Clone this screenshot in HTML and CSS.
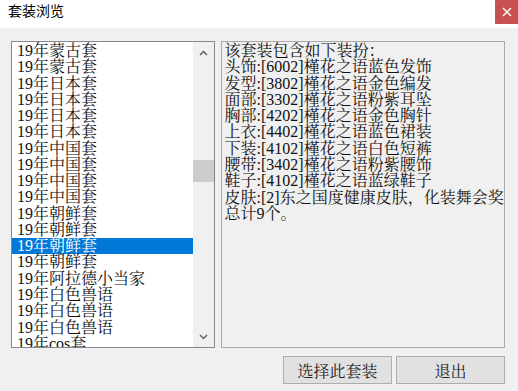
FILE: index.html
```html
<!DOCTYPE html>
<html lang="zh-CN">
<head>
    <meta charset="UTF-8">
    <title>套装浏览</title>
    <link rel="stylesheet" href="styles.css">
</head>
<body>

    <!-- Title bar -->
    <div class="titlebar">
        <span class="title">套装浏览</span>
        <div class="close-btn">
            <svg width="10" height="10" viewBox="0 0 10 10">
                <path d="M1 1 L9 9 M9 1 L1 9" stroke="#fff" stroke-width="1.4" fill="none"/>
            </svg>
        </div>
    </div>

    <div class="dialog-body">
        <div class="panes">
            <!-- Suit list -->
            <div class="listbox">
                <ul class="items">
                    <li>19年蒙古套</li>
                    <li>19年蒙古套</li>
                    <li>19年日本套</li>
                    <li>19年日本套</li>
                    <li>19年日本套</li>
                    <li>19年日本套</li>
                    <li>19年中国套</li>
                    <li>19年中国套</li>
                    <li>19年中国套</li>
                    <li>19年中国套</li>
                    <li>19年朝鲜套</li>
                    <li>19年朝鲜套</li>
                    <li class="selected">19年朝鲜套</li>
                    <li>19年朝鲜套</li>
                    <li>19年阿拉德小当家</li>
                    <li>19年白色兽语</li>
                    <li>19年白色兽语</li>
                    <li>19年白色兽语</li>
                    <li>19年cos套</li>
                </ul>
                <div class="scrollbar">
                    <div class="arrow">
                        <svg width="9" height="6" viewBox="0 0 9 6"><path d="M1 5 L4.5 1.5 L8 5" stroke="#606060" stroke-width="1.5" fill="none"/></svg>
                    </div>
                    <div class="track"><div class="thumb"></div></div>
                    <div class="arrow">
                        <svg width="9" height="6" viewBox="0 0 9 6"><path d="M1 1 L4.5 4.5 L8 1" stroke="#606060" stroke-width="1.5" fill="none"/></svg>
                    </div>
                </div>
            </div>

            <!-- Suit details -->
            <div class="detail">
<pre class="detail-text">该套装包含如下装扮：
头饰:[6002]槿花之语蓝色发饰
发型:[3802]槿花之语金色编发
面部:[3302]槿花之语粉紫耳坠
胸部:[4202]槿花之语金色胸针
上衣:[4402]槿花之语蓝色裙装
下装:[4102]槿花之语白色短裤
腰带:[3402]槿花之语粉紫腰饰
鞋子:[4102]槿花之语蓝绿鞋子
皮肤:[2]东之国度健康皮肤，化装舞会奖励
总计9个。</pre>
            </div>
        </div>

        <div class="actions">
            <button class="btn">选择此套装</button>
            <button class="btn">退出</button>
        </div>
    </div>

</body>
</html>
```

FILE: styles.css
```css
html, body {
    margin: 0;
    padding: 0;
}
body {
    width: 518px;
    height: 391px;
    background-color: #f0f0f0;
    font-family: "Liberation Serif", "Noto Serif CJK SC", "Noto Sans CJK SC", serif;
    font-size: 16px;
    color: #111;
    overflow: hidden;
}
.titlebar {
    height: 28px;
    background-color: #fff;
    display: flex;
    justify-content: space-between;
    align-items: flex-start;
}
.title {
    font-family: "Noto Sans CJK SC", sans-serif;
    font-size: 14px;
    line-height: 20px;
    padding-left: 8px;
    color: #000;
}
.close-btn {
    width: 23px;
    height: 24px;
    background-color: #c75050;
    display: flex;
    align-items: center;
    justify-content: center;
}
.dialog-body {
    padding: 13px 13px 0 11px;
}
.panes {
    display: flex;
    gap: 6px;
    height: 307px;
}
.listbox {
    width: 204px;
    box-sizing: border-box;
    border: 1px solid #828790;
    background-color: #fff;
    display: flex;
}
.items {
    list-style: none;
    margin: 0;
    padding: 1px 0 0 0;
    flex: 1;
    overflow: hidden;
}
.items li {
    line-height: 16.28px;
    height: 16.28px;
    padding-left: 5px;
    white-space: nowrap;
}
.items li.selected {
    background-color: #0078d7;
    color: #fff;
}
.scrollbar {
    width: 21px;
    background-color: #f0f0f0;
    display: flex;
    flex-direction: column;
}
.arrow {
    height: 21px;
    display: flex;
    align-items: center;
    justify-content: center;
}
.track {
    flex: 1;
}
.thumb {
    margin-top: 97px;
    height: 22px;
    background-color: #cdcdcd;
}
.detail {
    width: 285px;
    box-sizing: border-box;
    border: 1px solid #a9a9a9;
    background-color: #f0f0f0;
    overflow: hidden;
}
.detail-text {
    margin: 0;
    padding: 1px 0 0 3px;
    font-family: inherit;
    font-size: 16px;
    line-height: 16.28px;
    white-space: pre;
}
.actions {
    margin-top: 8px;
    display: flex;
    justify-content: flex-end;
    gap: 4px;
}
.btn {
    width: 109px;
    height: 28px;
    background-color: #e1e1e1;
    border: 1px solid #adadad;
    font-family: inherit;
    font-size: 16px;
    color: #222;
    padding: 0;
}
```
